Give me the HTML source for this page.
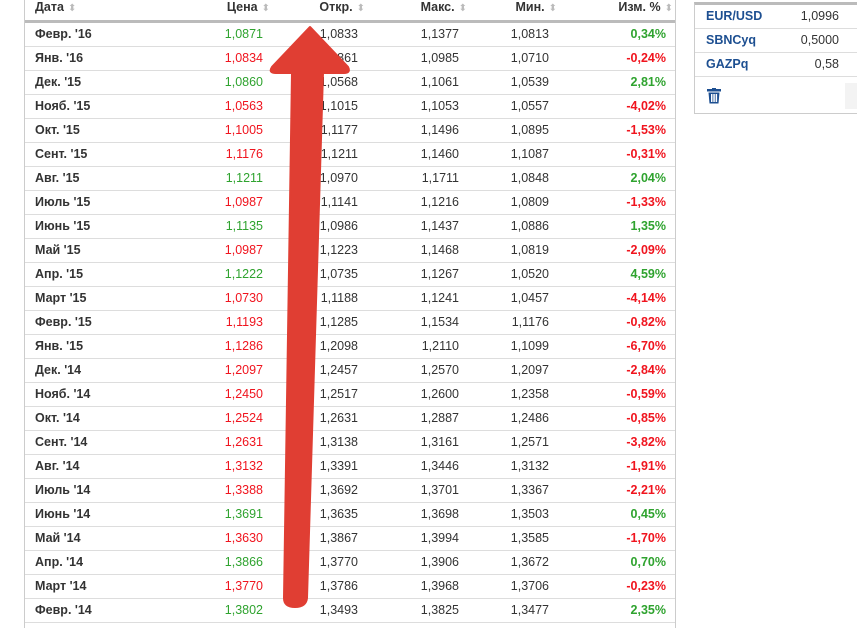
<!DOCTYPE html>
<html><head><meta charset="utf-8"><style>
body{margin:0;width:857px;height:622px;overflow:hidden;background:#fff;font-family:"Liberation Sans",Arial,sans-serif;font-size:12.5px;color:#333;position:relative}
.tbl{position:absolute;left:24px;top:-2px;width:650px;border-left:1px solid #ccc;border-right:1px solid #ccc;height:630px}
.hdr{height:22px;border-bottom:3px solid #bbb;position:relative;font-weight:bold}
.row{height:23px;border-bottom:1px solid #ddd;position:relative}
.c{position:absolute;top:0;line-height:23px;white-space:nowrap}
.hdr .c{line-height:18px;top:0}
.d{left:10px;font-weight:bold}
.g{color:#2fa32f}.r{color:#f0141e}
.ar{color:#bbb;font-size:10px;margin-left:4px;font-weight:normal}
.pct{font-weight:bold}
.panel{position:absolute;left:694px;top:2px;width:180px;height:108px;border:1px solid #ccc;border-top:3px solid #bbb}
.pr{height:23px;border-bottom:1px solid #ddd;position:relative;line-height:22px}
.pr b{color:#1d4f91;position:absolute;left:11px;font-size:12.5px}
.pr span{position:absolute;right:36px}
</style></head><body>
<div class="tbl">
<div class="hdr">
<span class="c d">Дата<span class="ar">⬍</span></span>
<span class="c" style="right:405px">Цена<span class="ar">⬍</span></span>
<span class="c" style="right:310px">Откр.<span class="ar">⬍</span></span>
<span class="c" style="right:208px">Макс.<span class="ar">⬍</span></span>
<span class="c" style="right:118px">Мин.<span class="ar">⬍</span></span>
<span class="c" style="right:2px">Изм. %<span class="ar">⬍</span></span>
</div>
<div id="rows"></div>
</div>
<div class="panel">
<div class="pr"><b>EUR/USD</b><span>1,0996</span></div>
<div class="pr"><b>SBNCyq</b><span>0,5000</span></div>
<div class="pr"><b>GAZPq</b><span>0,58</span></div>
<svg style="position:absolute;left:12px;top:83px" width="14" height="16" viewBox="0 0 14 16"><rect x="0" y="1" width="14" height="2.5" fill="#1d4f91"/><rect x="5" y="0" width="4" height="2" fill="#1d4f91"/><path d="M1.5 4.5h11l-1 11h-9z" fill="#1d4f91"/><rect x="4" y="6" width="1.5" height="8" fill="#fff"/><rect x="6.3" y="6" width="1.5" height="8" fill="#fff"/><rect x="8.6" y="6" width="1.5" height="8" fill="#fff"/></svg>
<div style="position:absolute;left:150px;top:78px;width:30px;height:26px;background:#f3f3f3"></div>
</div>
<svg style="position:absolute;left:0;top:0" width="857" height="622"><path d="M310 27 L348 67 Q351 73 344 73 L323 73 L307 598 Q306 607 295 607 Q284 607 284 598 L292 73 L276 73 Q268 73 272 67 Z" fill="#e03e33" stroke="#e03e33" stroke-width="2" stroke-linejoin="round"/></svg>
<script>
var data=[["Февр. '16","1,0871","1,0833","1,1377","1,0813","0,34%"],["Янв. '16","1,0834","1,0861","1,0985","1,0710","-0,24%"],["Дек. '15","1,0860","1,0568","1,1061","1,0539","2,81%"],["Нояб. '15","1,0563","1,1015","1,1053","1,0557","-4,02%"],["Окт. '15","1,1005","1,1177","1,1496","1,0895","-1,53%"],["Сент. '15","1,1176","1,1211","1,1460","1,1087","-0,31%"],["Авг. '15","1,1211","1,0970","1,1711","1,0848","2,04%"],["Июль '15","1,0987","1,1141","1,1216","1,0809","-1,33%"],["Июнь '15","1,1135","1,0986","1,1437","1,0886","1,35%"],["Май '15","1,0987","1,1223","1,1468","1,0819","-2,09%"],["Апр. '15","1,1222","1,0735","1,1267","1,0520","4,59%"],["Март '15","1,0730","1,1188","1,1241","1,0457","-4,14%"],["Февр. '15","1,1193","1,1285","1,1534","1,1176","-0,82%"],["Янв. '15","1,1286","1,2098","1,2110","1,1099","-6,70%"],["Дек. '14","1,2097","1,2457","1,2570","1,2097","-2,84%"],["Нояб. '14","1,2450","1,2517","1,2600","1,2358","-0,59%"],["Окт. '14","1,2524","1,2631","1,2887","1,2486","-0,85%"],["Сент. '14","1,2631","1,3138","1,3161","1,2571","-3,82%"],["Авг. '14","1,3132","1,3391","1,3446","1,3132","-1,91%"],["Июль '14","1,3388","1,3692","1,3701","1,3367","-2,21%"],["Июнь '14","1,3691","1,3635","1,3698","1,3503","0,45%"],["Май '14","1,3630","1,3867","1,3994","1,3585","-1,70%"],["Апр. '14","1,3866","1,3770","1,3906","1,3672","0,70%"],["Март '14","1,3770","1,3786","1,3968","1,3706","-0,23%"],["Февр. '14","1,3802","1,3493","1,3825","1,3477","2,35%"]];
var h="";data.forEach(function(r){var cl=r[5][0]=="-"?"r":"g";h+='<div class="row"><span class="c d">'+r[0]+'</span><span class="c '+cl+'" style="right:412px">'+r[1]+'</span><span class="c" style="right:317px">'+r[2]+'</span><span class="c" style="right:216px">'+r[3]+'</span><span class="c" style="right:126px">'+r[4]+'</span><span class="c pct '+cl+'" style="right:9px">'+r[5]+'</span></div>'});
document.getElementById("rows").innerHTML=h;
</script>
</body></html>
